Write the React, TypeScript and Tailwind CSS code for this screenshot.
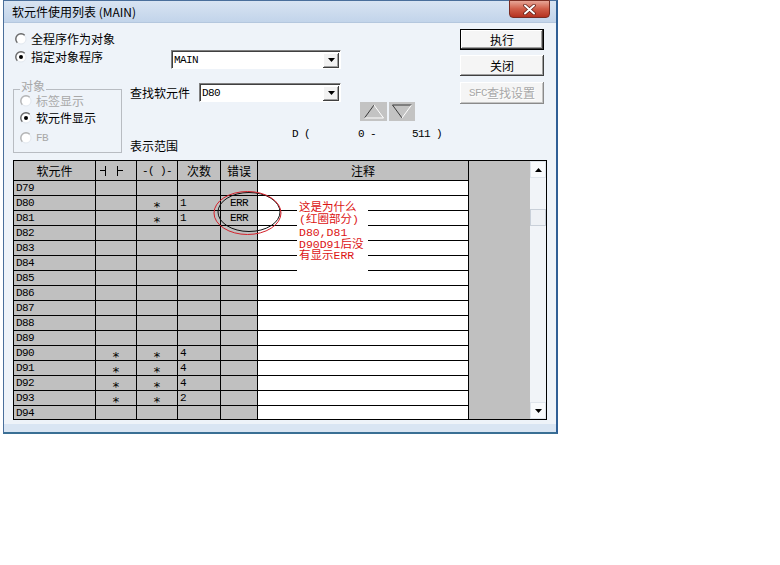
import React from 'react';

const mono = "font-['Liberation_Mono',monospace] text-[11px] tracking-[-0.6px]";
const cjk = "font-['Noto_Sans_CJK_SC',sans-serif] text-[12px]";

const rows: string[][] = [
    ['D79', '', '', '', ''],
    ['D80', '', '*', '1', 'ERR'],
    ['D81', '', '*', '1', 'ERR'],
    ['D82', '', '', '', ''],
    ['D83', '', '', '', ''],
    ['D84', '', '', '', ''],
    ['D85', '', '', '', ''],
    ['D86', '', '', '', ''],
    ['D87', '', '', '', ''],
    ['D88', '', '', '', ''],
    ['D89', '', '', '', ''],
    ['D90', '*', '*', '4', ''],
    ['D91', '*', '*', '4', ''],
    ['D92', '*', '*', '4', ''],
    ['D93', '*', '*', '2', ''],
    ['D94', '', '', '', ''],
];

function Radio({ checked = false, disabled = false }: { checked?: boolean; disabled?: boolean }) {
    const c = disabled ? '#b4b4b4' : '#6a6a6a';
    return (
        <svg width="12" height="12" viewBox="0 0 12 12" className="shrink-0">
            <circle cx="6" cy="6" r="5" fill="#ffffff" stroke="#e2e8ef" strokeWidth="1" />
            <path d="M2.3 9.7 A5.2 5.2 0 0 1 9.7 2.3" fill="none" stroke={c} strokeWidth="1.4" />
            {checked && <circle cx="6" cy="6" r="2" fill="#000000" />}
        </svg>
    );
}

function DropArrow() {
    return (
        <svg width="7" height="4" viewBox="0 0 7 4">
            <path d="M0 0 H7 L3.5 4 Z" fill="#000000" />
        </svg>
    );
}

function Combo({ text, className }: { text: string; className: string }) {
    return (
        <div
            className={`${className} h-[19px] flex items-center bg-white border border-t-[#808080] border-l-[#808080] border-b-white border-r-white shadow-[inset_1px_1px_0_#404040]`}
        >
            <span className={`${mono} pl-[2px] pt-[1px] text-black`}>{text}</span>
            <div className="ml-auto mr-[1px] mt-[1px] w-[16px] h-[15px] flex items-center justify-center bg-[#f2f2f2] shadow-[inset_-1px_-1px_0_#404040,inset_1px_1px_0_#ffffff,inset_-2px_-2px_0_#a0a0a0]">
                <DropArrow />
            </div>
        </div>
    );
}

const raised =
    'bg-[#f5f5f5] shadow-[inset_-1px_-1px_0_#404040,inset_1px_1px_0_#ffffff,inset_-2px_-2px_0_#a0a0a0]';

const grayCell = 'bg-[#c0c0c0] border-r border-b border-black flex items-center';
const star = "font-['DejaVu_Sans_Mono',monospace] text-[13px] leading-[14px]";

export default function App() {
    return (
        <div className="w-[780px] h-[565px] bg-white overflow-hidden">
            {/* Window */}
            <div className="ml-[3px] w-[555px] h-[434px] flex flex-col border border-[#4a6f9b] border-r-2 border-b-2 border-r-[#2f5f96] border-b-[#3a6f94]">
                {/* Title bar */}
                <div className="h-[22px] shrink-0 flex items-center bg-linear-to-b from-[#d8e4f2] to-[#c2d4ea] border-b border-[#b4c7de]">
                    <span className={`${cjk} pl-[8px] text-black leading-[14px]`}>软元件使用列表 (MAIN)</span>
                    <div className="ml-auto mr-[6px] self-start -mt-[1px] w-[41px] h-[18px] rounded-b-[4px] border border-[#7a2c22] bg-linear-to-b from-[#e6a596] via-[#cf5c47] to-[#b5311f] flex items-center justify-center">
                        <svg width="13" height="11" viewBox="0 0 13 11">
                            <path d="M2 1.5 L11 9.5 M11 1.5 L2 9.5" stroke="#5a1a12" strokeWidth="3.4" strokeLinecap="round" />
                            <path d="M2 1.5 L11 9.5 M11 1.5 L2 9.5" stroke="#ffffff" strokeWidth="2" strokeLinecap="round" />
                        </svg>
                    </div>
                </div>

                {/* Content */}
                <div className="flex-1 bg-[#eef3f9] pl-[9px] flex flex-col">
                    {/* Top section */}
                    <div className="h-[137px] shrink-0 flex">
                        {/* Left column */}
                        <div className="w-[109px] flex flex-col">
                            <div className="mt-[8px] h-[16px] pl-[2px] flex items-center gap-[4px]">
                                <Radio />
                                <span className={`${cjk} leading-[16px] text-black whitespace-nowrap`}>全程序作为对象</span>
                            </div>
                            <div className="mt-[2px] h-[16px] pl-[2px] flex items-center gap-[4px]">
                                <Radio checked />
                                <span className={`${cjk} leading-[16px] text-black whitespace-nowrap`}>指定对象程序</span>
                            </div>
                            <div className="relative mt-[24px] h-[64px] border border-[#b8bcc2] flex flex-col pt-[3px]">
                                <span className={`${cjk} absolute left-[6px] -top-[10px] px-[1px] leading-[12px] bg-[#eef3f9] text-[#a8a8a8]`}>
                                    对象
                                </span>
                                <div className="h-[16px] pl-[6px] flex items-center gap-[4px]">
                                    <Radio disabled />
                                    <span className={`${cjk} leading-[16px] text-[#a8a8a8]`}>标签显示</span>
                                </div>
                                <div className="mt-[1px] h-[16px] pl-[6px] flex items-center gap-[4px]">
                                    <Radio checked />
                                    <span className={`${cjk} leading-[16px] text-black`}>软元件显示</span>
                                </div>
                                <div className="mt-[4px] h-[16px] pl-[6px] flex items-center gap-[4px]">
                                    <Radio disabled />
                                    <span className={`${mono} leading-[16px] text-[#a8a8a8]`}>FB</span>
                                </div>
                            </div>
                        </div>

                        {/* Middle column */}
                        <div className="ml-[8px] w-[330px] flex flex-col">
                            <Combo text="MAIN" className="mt-[27px] ml-[41px] w-[170px]" />
                            <div className="mt-[14px] h-[19px] flex items-center">
                                <span className={`${cjk} w-[69px] leading-[14px] text-black`}>查找软元件</span>
                                <Combo text="D80" className="w-[142px]" />
                            </div>
                            <div className="h-[19px] ml-[230px] flex gap-[2px]">
                                <div className="w-[27px] h-[19px] bg-[#c3c3c3] flex items-center justify-center">
                                    <svg width="22" height="15" viewBox="0 0 22 15">
                                        <path d="M11 1 L1.5 14" stroke="#3a3a3a" strokeWidth="1" fill="none" />
                                        <path d="M11 1 L20.5 14 H1.5" stroke="#ffffff" strokeWidth="1" fill="none" />
                                    </svg>
                                </div>
                                <div className="w-[26px] h-[19px] bg-[#c3c3c3] flex items-center justify-center">
                                    <svg width="22" height="15" viewBox="0 0 22 15">
                                        <path d="M20.5 1 H1.5 L11 14" stroke="#3a3a3a" strokeWidth="1" fill="none" />
                                        <path d="M11 14 L20.5 1" stroke="#ffffff" strokeWidth="1" fill="none" />
                                    </svg>
                                </div>
                            </div>
                            <div className={`${mono} mt-[7px] ml-[162px] h-[12px] leading-[12px] whitespace-pre text-black`}>
                                {'D (        0 -      511 )'}
                            </div>
                            <div className={`${cjk} h-[12px] leading-[12px] text-black`}>表示范围</div>
                        </div>

                        {/* Right column: buttons */}
                        <div className="w-[84px] flex flex-col">
                            <div className={`mt-[6px] h-[21px] border border-black flex items-center justify-center ${raised}`}>
                                <span className={`${cjk} leading-[14px] text-black`}>执行</span>
                            </div>
                            <div className={`mt-[5px] h-[21px] flex items-center justify-center ${raised}`}>
                                <span className={`${cjk} leading-[14px] text-black`}>关闭</span>
                            </div>
                            <div className="mt-[6px] h-[22px] flex items-center justify-center bg-[#f5f5f5] shadow-[inset_-1px_-1px_0_#8a8a8a,inset_1px_1px_0_#ffffff,inset_-2px_-2px_0_#c4c4c4]">
                                <span className={`${mono} leading-[14px] text-[#a8a8a8] [text-shadow:1px_1px_0_#ffffff]`}>SFC</span>
                                <span className={`${cjk} leading-[14px] text-[#a8a8a8] [text-shadow:1px_1px_0_#ffffff]`}>查找设置</span>
                            </div>
                        </div>
                    </div>

                    {/* Table */}
                    <div className="relative w-[534px] h-[260px] border border-black flex">
                        <div className="w-[455px] flex flex-col">
                            {/* Header */}
                            <div className="h-[20px] shrink-0 flex bg-[#c0c0c0] border-b border-black">
                                <div className={`w-[82px] border-r border-black flex items-center justify-center ${cjk} leading-[14px]`}>软元件</div>
                                {/* contact symbol ┤ ├ */}
                                <div className="w-[41px] border-r border-black flex items-center pl-[4px]">
                                    <div className="flex items-center">
                                        <div className="w-[5px] h-px bg-black" />
                                        <div className="w-px h-[10px] bg-black" />
                                    </div>
                                    <div className="ml-[11px] flex items-center">
                                        <div className="w-px h-[10px] bg-black" />
                                        <div className="w-[5px] h-px bg-black" />
                                    </div>
                                </div>
                                <div className={`w-[41px] border-r border-black flex items-center justify-center ${mono} leading-[14px] whitespace-pre`}>-( )-</div>
                                <div className={`w-[43px] border-r border-black flex items-center justify-center ${cjk} leading-[14px]`}>次数</div>
                                <div className={`w-[37px] border-r border-black flex items-center justify-center ${cjk} leading-[14px]`}>错误</div>
                                <div className={`w-[211px] border-r border-black flex items-center justify-center ${cjk} leading-[14px]`}>注释</div>
                            </div>
                            {/* Body */}
                            <div className="h-[238px] overflow-hidden flex flex-col">
                                {rows.map((r) => (
                                    <div key={r[0]} className="h-[15px] shrink-0 flex">
                                        <div className={`w-[82px] pl-[2px] ${grayCell}`}>
                                            <span className={`${mono} leading-[14px]`}>{r[0]}</span>
                                        </div>
                                        <div className={`w-[41px] justify-center pt-[8px] ${grayCell}`}>
                                            <span className={star}>{r[1]}</span>
                                        </div>
                                        <div className={`w-[41px] justify-center pt-[8px] ${grayCell}`}>
                                            <span className={star}>{r[2]}</span>
                                        </div>
                                        <div className={`w-[43px] pl-[2px] ${grayCell}`}>
                                            <span className={`${mono} leading-[14px]`}>{r[3]}</span>
                                        </div>
                                        <div className={`w-[37px] justify-center ${grayCell}`}>
                                            <span className={`${mono} leading-[14px]`}>{r[4]}</span>
                                        </div>
                                        <div className="w-[211px] bg-white border-r border-b border-black" />
                                    </div>
                                ))}
                            </div>
                        </div>
                        <div className="w-[61px] bg-[#c0c0c0]" />
                        {/* Scrollbar */}
                        <div className="w-[16px] flex flex-col bg-[#f1f4f8]">
                            <div className="h-[17px] shrink-0 flex items-center justify-center bg-[#f8fafc] border border-[#dfe5ec]">
                                <svg width="7" height="4" viewBox="0 0 7 4">
                                    <path d="M0 4 H7 L3.5 0 Z" fill="#000000" />
                                </svg>
                            </div>
                            <div className="flex-1">
                                <div className="mt-[31px] h-[17px] border border-[#c9d0d9] bg-[#eef1f5]" />
                            </div>
                            <div className="h-[17px] shrink-0 flex items-center justify-center bg-[#f8fafc] border border-[#dfe5ec]">
                                <DropArrow />
                            </div>
                        </div>

                        {/* Red circle annotation */}
                        <svg className="absolute left-[198px] top-[28px]" width="74" height="50" viewBox="0 0 74 50">
                            <ellipse cx="37" cy="23" rx="31" ry="19.5" fill="none" stroke="#111111" strokeWidth="1" />
                            <ellipse cx="35.5" cy="24" rx="33.5" ry="21.5" fill="none" stroke="#d4202a" strokeWidth="1" />
                        </svg>

                        {/* Note box */}
                        <div className="absolute left-[283px] top-[40px] w-[71px] h-[77px] bg-white pl-[2px] pt-[1px] font-['Liberation_Mono','Noto_Sans_CJK_SC',monospace] text-[11.5px] leading-[11.5px] text-[#dc1414] whitespace-nowrap">
                            <div>这是为什么</div>
                            <div>(红圈部分)</div>
                            <div className="mt-[2px]">D80,D81</div>
                            <div>D90D91后没</div>
                            <div>有显示ERR</div>
                        </div>
                    </div>
                </div>

                {/* Bottom frame strip */}
                <div className="h-[8px] shrink-0 bg-[#d9e5f3]" />
            </div>
        </div>
    );
}
